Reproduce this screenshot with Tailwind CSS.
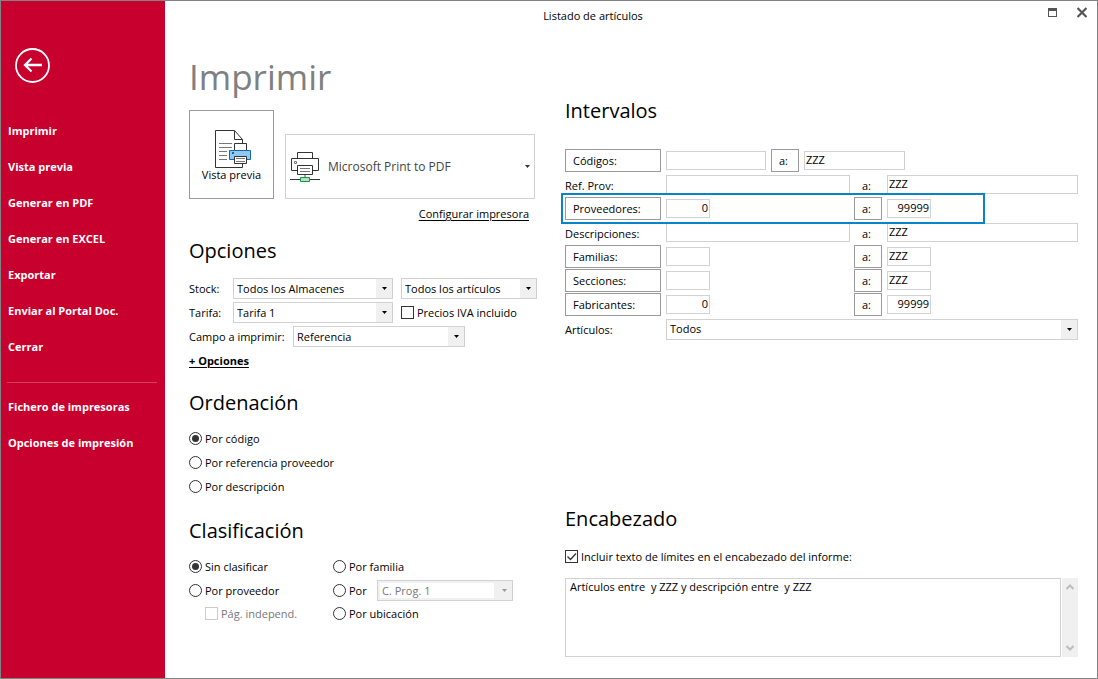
<!DOCTYPE html>
<html lang="es">
<head>
<meta charset="utf-8">
<title>Listado de artículos</title>
<script src="https://cdn.jsdelivr.net/npm/@tailwindcss/browser@4"></script>
</head>
<body class="bg-white font-['Open_Sans','Noto_Sans',sans-serif] text-[11px] leading-4 text-black">
<div class="flex min-h-screen border border-[#828282]">

  <aside class="w-41 shrink-0 bg-[#c8002d] pt-[47px] font-bold text-white">
    <button type="button" aria-label="Volver" class="ml-3.5 block size-[35px]">
      <svg viewBox="0 0 35 35" class="size-full" fill="none" stroke="#fff">
        <circle cx="17.5" cy="17.5" r="16.5" stroke-width="1.800"/>
        <path d="M27 17H10.500M16.500 10.500L10 17L16.500 23.500" stroke-width="2.300"/>
      </svg>
    </button>
    <nav class="mt-[30px] flex flex-col">
      <a href="#" class="flex h-9 items-center pl-[7px]">Imprimir</a>
      <a href="#" class="flex h-9 items-center pl-[7px]">Vista previa</a>
      <a href="#" class="flex h-9 items-center pl-[7px]">Generar en PDF</a>
      <a href="#" class="flex h-9 items-center pl-[7px]">Generar en EXCEL</a>
      <a href="#" class="flex h-9 items-center pl-[7px]">Exportar</a>
      <a href="#" class="flex h-9 items-center pl-[7px]">Enviar al Portal Doc.</a>
      <a href="#" class="flex h-9 items-center pl-[7px]">Cerrar</a>
      <hr class="mt-[17px] mr-2 mb-1.5 ml-1.5 border-[#d63d5c]">
      <a href="#" class="flex h-9 items-center pl-[7px]">Fichero de impresoras</a>
      <a href="#" class="flex h-9 items-center pl-[7px]">Opciones de impresión</a>
    </nav>
  </aside>

  <div class="flex min-w-0 flex-1 flex-col">
    <header class="flex h-[30px] items-start">
      <p class="flex-1 pt-[7px] text-center">Listado de artículos</p>
      <div class="flex w-19 items-center justify-end gap-5 pt-[5px] pr-2.5">
        <button type="button" aria-label="Maximizar"><svg class="block h-3 w-[10px]" viewBox="0 0 10 12" shape-rendering="crispEdges"><path d="M1 2h9v9H1z" fill="#555"/><path d="M2 5h7v5H2z" fill="#fff"/></svg></button>
        <button type="button" aria-label="Cerrar"><svg class="block h-3 w-[10px]" viewBox="0 0 10 12" stroke="#555" stroke-width="2.200"><path d="M.5 2l9 9M9.500 2l-9 9"/></svg></button>
      </div>
    </header>

    <main class="grid flex-1 grid-cols-[352px_1fr] gap-x-6 pr-[19px] pl-6">
      <div class="pt-5">
        <h1 class="flex h-[52px] items-center text-[35px] text-[#808080]">Imprimir</h1>

        <div class="mt-[7px] flex items-end gap-[11px]">
          <button type="button" class="flex h-[89px] w-[85px] flex-col items-center border border-[#9b9b9b] pt-[19px]">
            <svg class="ml-1 h-[38px] w-[37px]" viewBox="0 0 37 38" fill="none" stroke="#333">
              <path d="M.5.500h19l8 9v28H.500z" fill="#fff"/>
              <path d="M19.500.500v9h8"/>
              <path d="M4 13.500h13M4 17.500h13M4 21.500h8M4 25.500h8M4 29.500h8" stroke="#777"/>
              <path d="M19.500 20.500v-7h12v7" fill="#fff"/>
              <path d="M14.500 20.500h21v9h-21z" fill="#92c8ee" stroke="#1068b0"/>
              <path d="M17 22h2v2h-2z" fill="#1068b0" stroke="none"/>
              <path d="M19.500 26.500h12v7h-12z" fill="#fff"/>
              <path d="M21 28.500h9M21 31.500h9" stroke="#777"/>
            </svg>
            <span class="-mt-px">Vista previa</span>
          </button>
          <button type="button" class="flex h-[65px] w-[250px] items-center border border-[#d2d2d2] px-1 text-xs text-[#444]">
            <svg class="h-8 w-[31px]" viewBox="0 0 31 32" fill="none" stroke="#333">
              <path d="M7.500 7.500v-6h15v6"/>
              <path d="M1.500 7.500h27v12h-27z" fill="#fff"/>
              <path d="M4.500 10.500h2v2h-2z" stroke="#777"/>
              <path d="M7.500 14.500h15v9h-15z" fill="#fff"/>
              <path d="M10 17.500h10M10 20.500h10" stroke="#777"/>
              <path d="M15 24v2" stroke="#aaa" stroke-width="2"/>
              <path d="M0 28.500h30"/>
              <path d="M10.500 26.500h9v4h-9z" fill="#b5e3c0" stroke="#109a48"/>
            </svg>
            <span class="flex-1 pl-[7px] text-left">Microsoft Print to PDF</span>
            <svg class="h-[3px] w-[5px]" viewBox="0 0 5 3"><path d="M0 0h5L2.500 3z" fill="#333"/></svg>
          </button>
        </div>
        <p class="mt-1.5 pr-3 text-right leading-[18px]"><a href="#" class="underline underline-offset-2">Configurar impresora</a></p>

        <section class="mt-3.5">
          <h2 class="flex h-7 items-center text-xl font-normal">Opciones</h2>
          <div class="mt-3 flex h-6 items-center pb-px">
            <label for="stock" class="w-11">Stock:</label>
            <span class="relative h-[21px] w-40"><select id="stock" class="size-full appearance-none border border-[#d2d2d2] bg-white pl-[3px]"><option>Todos los Almacenes</option></select>
              <span class="pointer-events-none absolute inset-y-px right-px flex w-4 items-center justify-center bg-[#f0f0f0]"><svg class="h-[3px] w-[5px]" viewBox="0 0 5 3"><path d="M0 0h5L2.500 3z"/></svg></span></span>
            <span class="relative ml-2 h-[21px] w-34"><select aria-label="Artículos en stock" class="size-full appearance-none border border-[#d2d2d2] bg-white pl-[3px]"><option>Todos los artículos</option></select>
              <span class="pointer-events-none absolute inset-y-px right-px flex w-4 items-center justify-center bg-[#f0f0f0]"><svg class="h-[3px] w-[5px]" viewBox="0 0 5 3"><path d="M0 0h5L2.500 3z"/></svg></span></span>
          </div>
          <div class="flex h-6 items-center pb-px">
            <label for="tarifa" class="w-11">Tarifa:</label>
            <span class="relative h-[21px] w-40"><select id="tarifa" class="size-full appearance-none border border-[#d2d2d2] bg-white pl-[3px]"><option>Tarifa 1</option></select>
              <span class="pointer-events-none absolute inset-y-px right-px flex w-4 items-center justify-center bg-[#f0f0f0]"><svg class="h-[3px] w-[5px]" viewBox="0 0 5 3"><path d="M0 0h5L2.500 3z"/></svg></span></span>
            <label class="ml-2 flex items-center gap-[3px]"><input type="checkbox" class="size-[13px] appearance-none border border-[#333] bg-white">Precios IVA incluido</label>
          </div>
          <div class="flex h-6 items-center pb-px">
            <label for="campo" class="w-26">Campo a imprimir:</label>
            <span class="relative h-[21px] w-43"><select id="campo" class="size-full appearance-none border border-[#d2d2d2] bg-white pl-[3px]"><option>Referencia</option></select>
              <span class="pointer-events-none absolute inset-y-px right-px flex w-4 items-center justify-center bg-[#f0f0f0]"><svg class="h-[3px] w-[5px]" viewBox="0 0 5 3"><path d="M0 0h5L2.500 3z"/></svg></span></span>
          </div>
          <a href="#" class="flex h-6 items-center font-bold underline underline-offset-2">+ Opciones</a>
        </section>

        <section class="mt-4">
          <h2 class="flex h-7 items-center text-xl font-normal">Ordenación</h2>
          <div class="mt-2.5 flex flex-col">
            <label class="flex h-6 items-center gap-[3px] pb-px"><input type="radio" name="orden" checked class="grid size-[13px] appearance-none place-items-center rounded-full border border-[#333] before:size-[7px] before:rounded-full checked:before:bg-[#333]">Por código</label>
            <label class="flex h-6 items-center gap-[3px] pb-px"><input type="radio" name="orden" class="grid size-[13px] appearance-none place-items-center rounded-full border border-[#333] before:size-[7px] before:rounded-full checked:before:bg-[#333]">Por referencia proveedor</label>
            <label class="flex h-6 items-center gap-[3px] pb-px"><input type="radio" name="orden" class="grid size-[13px] appearance-none place-items-center rounded-full border border-[#333] before:size-[7px] before:rounded-full checked:before:bg-[#333]">Por descripción</label>
          </div>
        </section>

        <section class="mt-[18px]">
          <h2 class="flex h-7 items-center text-xl font-normal">Clasificación</h2>
          <div class="mt-2.5 grid grid-cols-[144px_1fr]">
            <label class="flex h-6 items-center gap-[3px] pb-px"><input type="radio" name="clase" checked class="grid size-[13px] appearance-none place-items-center rounded-full border border-[#333] before:size-[7px] before:rounded-full checked:before:bg-[#333]">Sin clasificar</label>
            <label class="flex h-6 items-center gap-[3px] pb-px"><input type="radio" name="clase" class="grid size-[13px] appearance-none place-items-center rounded-full border border-[#333] before:size-[7px] before:rounded-full checked:before:bg-[#333]">Por familia</label>
            <label class="flex h-6 items-center gap-[3px] pb-px"><input type="radio" name="clase" class="grid size-[13px] appearance-none place-items-center rounded-full border border-[#333] before:size-[7px] before:rounded-full checked:before:bg-[#333]">Por proveedor</label>
            <div class="flex h-6 items-center pb-px">
              <label class="flex w-11 items-center gap-[3px]"><input type="radio" name="clase" class="grid size-[13px] shrink-0 appearance-none place-items-center rounded-full border border-[#333] before:size-[7px] before:rounded-full checked:before:bg-[#333]">Por</label>
              <span class="flex h-[21px] w-34 items-center border border-[#d2d2d2] bg-[#f0f0f0] p-0.5"><select disabled aria-label="Clasificar por" class="h-full flex-1 appearance-none bg-white pl-0.5 text-[#777] opacity-100"><option>C. Prog. 1</option></select>
                <svg class="mr-[3px] ml-2 h-[3px] w-[5px]" viewBox="0 0 5 3"><path d="M0 0h5L2.500 3z" fill="#999"/></svg></span>
            </div>
            <label class="flex h-[22px] items-center gap-[3px] pb-px pl-4 text-[#777]"><input type="checkbox" disabled class="size-[13px] appearance-none border border-[#ccc] bg-white">Pág. independ.</label>
            <label class="flex h-[22px] items-center gap-[3px] pb-px"><input type="radio" name="clase" class="grid size-[13px] appearance-none place-items-center rounded-full border border-[#333] before:size-[7px] before:rounded-full checked:before:bg-[#333]">Por ubicación</label>
          </div>
        </section>
      </div>

      <div class="flex flex-col pt-[66px] pb-[21px]">
        <section>
          <h2 class="flex h-7 items-center text-xl font-normal">Intervalos</h2>
          <div class="mt-6 grid h-6 grid-cols-[96px_100px_28px_101px] items-center gap-x-[5px] pb-px">
            <button type="button" class="h-[23px] border border-[#9b9b9b] pl-[7px] text-left">Códigos:</button>
            <input aria-label="Códigos desde" class="h-[19px] border border-[#d2d2d2] px-px pb-0.5">
            <button type="button" class="h-[23px] border border-[#9b9b9b] pl-[7px] text-left">a:</button>
            <input aria-label="Códigos hasta" value="ZZZ" class="h-[19px] border border-[#d2d2d2] px-px pb-0.5">
          </div>
          <div class="grid h-6 grid-cols-[96px_184px_27px_1fr] items-center gap-x-[5px] pb-px">
            <label for="ref1" class="pt-0.5">Ref. Prov:</label>
            <input id="ref1" class="h-[19px] min-w-0 border border-[#d2d2d2] px-px pb-0.5">
            <label for="ref2" class="pt-0.5 pl-[7px]">a:</label>
            <input id="ref2" value="ZZZ" class="h-[19px] min-w-0 border border-[#d2d2d2] px-px pb-0.5">
          </div>
          <div class="relative grid h-6 grid-cols-[96px_183px_28px_1fr] items-center gap-x-[5px] pb-px">
            <button type="button" class="h-[23px] border border-[#9b9b9b] pl-[7px] text-left">Proveedores:</button>
            <input aria-label="Proveedores desde" value="0" class="h-[19px] w-11 border border-[#d2d2d2] px-px pb-0.5 text-right">
            <button type="button" class="h-[23px] border border-[#9b9b9b] pl-[7px] text-left">a:</button>
            <input aria-label="Proveedores hasta" value="99999" class="h-[19px] w-11 border border-[#d2d2d2] px-px pb-0.5 text-right">
            <span class="pointer-events-none absolute -top-1 right-[93px] -bottom-[3px] -left-1 z-10 border-2 border-[#0a84c8]"></span>
          </div>
          <div class="grid h-6 grid-cols-[96px_184px_27px_1fr] items-center gap-x-[5px] pb-px">
            <label for="des1" class="pt-0.5">Descripciones:</label>
            <input id="des1" class="h-[19px] min-w-0 border border-[#d2d2d2] px-px pb-0.5">
            <label for="des2" class="pt-0.5 pl-[7px]">a:</label>
            <input id="des2" value="ZZZ" class="h-[19px] min-w-0 border border-[#d2d2d2] px-px pb-0.5">
          </div>
          <div class="grid h-6 grid-cols-[96px_183px_28px_1fr] items-center gap-x-[5px] pb-px">
            <button type="button" class="h-[23px] border border-[#9b9b9b] pl-[7px] text-left">Familias:</button>
            <input aria-label="Familias desde" class="h-[19px] w-11 border border-[#d2d2d2] px-px pb-0.5">
            <button type="button" class="h-[23px] border border-[#9b9b9b] pl-[7px] text-left">a:</button>
            <input aria-label="Familias hasta" value="ZZZ" class="h-[19px] w-11 border border-[#d2d2d2] px-px pb-0.5">
          </div>
          <div class="grid h-6 grid-cols-[96px_183px_28px_1fr] items-center gap-x-[5px] pb-px">
            <button type="button" class="h-[23px] border border-[#9b9b9b] pl-[7px] text-left">Secciones:</button>
            <input aria-label="Secciones desde" class="h-[19px] w-11 border border-[#d2d2d2] px-px pb-0.5">
            <button type="button" class="h-[23px] border border-[#9b9b9b] pl-[7px] text-left">a:</button>
            <input aria-label="Secciones hasta" value="ZZZ" class="h-[19px] w-11 border border-[#d2d2d2] px-px pb-0.5">
          </div>
          <div class="grid h-6 grid-cols-[96px_183px_28px_1fr] items-center gap-x-[5px] pb-px">
            <button type="button" class="h-[23px] border border-[#9b9b9b] pl-[7px] text-left">Fabricantes:</button>
            <input aria-label="Fabricantes desde" value="0" class="h-[19px] w-11 border border-[#d2d2d2] px-px pb-0.5 text-right">
            <button type="button" class="h-[23px] border border-[#9b9b9b] pl-[7px] text-left">a:</button>
            <input aria-label="Fabricantes hasta" value="99999" class="h-[19px] w-11 border border-[#d2d2d2] px-px pb-0.5 text-right">
          </div>
          <div class="grid h-6 grid-cols-[96px_1fr] items-center gap-x-[5px]">
            <label for="articulos" class="pt-0.5">Artículos:</label>
            <span class="relative h-[21px]"><select id="articulos" class="size-full appearance-none border border-[#d2d2d2] bg-white pl-[3px]"><option>Todos</option></select>
              <span class="pointer-events-none absolute inset-y-px right-px flex w-4 items-center justify-center bg-[#f0f0f0]"><svg class="h-[3px] w-[5px]" viewBox="0 0 5 3"><path d="M0 0h5L2.500 3z"/></svg></span></span>
          </div>
        </section>

        <section class="mt-auto">
          <h2 class="flex h-7 items-center text-xl font-normal">Encabezado</h2>
          <label class="mt-3 flex h-6 items-center gap-[3px] pb-px">
            <span class="grid size-[13px] place-items-center"><input type="checkbox" checked class="col-start-1 row-start-1 size-[13px] appearance-none border border-[#333] bg-white"><svg class="pointer-events-none col-start-1 row-start-1 size-[13px]" viewBox="0 0 13 13" fill="none" stroke="#333" stroke-width="1.300"><path d="M2.500 6.500l3 3 5.500-6"/></svg></span>
            Incluir texto de límites en el encabezado del informe:</label>
          <div class="mt-[9px] flex h-[79px] gap-px">
            <textarea aria-label="Texto del encabezado" class="h-full flex-1 resize-none overflow-hidden border border-[#d2d2d2] px-1">Artículos entre  y ZZZ y descripción entre  y ZZZ</textarea>
            <div class="flex w-4 flex-col items-center justify-between bg-[#f0f0f0] py-1.5">
              <svg class="h-[6px] w-[8px]" viewBox="0 0 8 6" fill="none" stroke="#bdbdbd" stroke-width="2"><path d="M.5 5L4 1.500 7.500 5"/></svg>
              <svg class="h-[6px] w-[8px]" viewBox="0 0 8 6" fill="none" stroke="#bdbdbd" stroke-width="2"><path d="M.5 1L4 4.500 7.500 1"/></svg>
            </div>
          </div>
        </section>
      </div>
    </main>
  </div>
</div>
</body>
</html>
